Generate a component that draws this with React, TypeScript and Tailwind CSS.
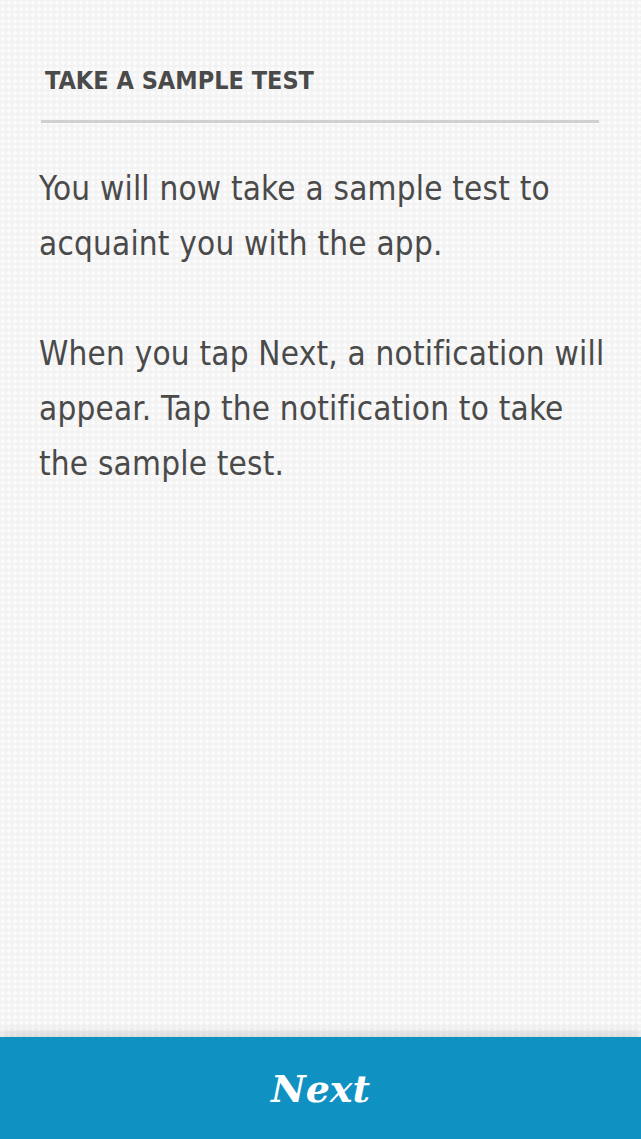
export default function App() {
  return (
    <div
      className="flex h-[1139px] w-full flex-col bg-[#f3f3f3] bg-[radial-gradient(circle,#fbfbfb_1.6px,transparent_2.2px)] bg-[length:6px_6px]"
      style={{ fontFamily: '"DejaVu Sans Condensed", "DejaVu Sans", sans-serif' }}
    >
      <div className="flex-1 px-[41px] pt-[63px]">
        <h1 className="pl-[4px] text-[25px] font-bold leading-[36px] text-[#4a4a4a]">
          TAKE A SAMPLE TEST
        </h1>
        <div className="mt-[21px] h-[3px] w-[558px] bg-[#d0d0d0]" />
        <div className="mt-[38px] -ml-[2px] whitespace-nowrap text-[33px] leading-[55px] tracking-[0.2px] text-[#4a4a4a]">
          <p>
            You will now take a sample test to
            <br />
            acquaint you with the app.
          </p>
          <p className="mt-[55px]">
            When you tap Next, a notification will
            <br />
            appear. Tap the notification to take
            <br />
            the sample test.
          </p>
        </div>
      </div>
      <button className="relative flex h-[102px] w-full items-center justify-center bg-[#0f91c2] shadow-[0_-4px_10px_rgba(0,0,0,0.14)]">
        <span
          className="text-[38px] font-bold italic text-white"
          style={{ fontFamily: '"DejaVu Serif", "Liberation Serif", serif' }}
        >
          Next
        </span>
      </button>
    </div>
  );
}
